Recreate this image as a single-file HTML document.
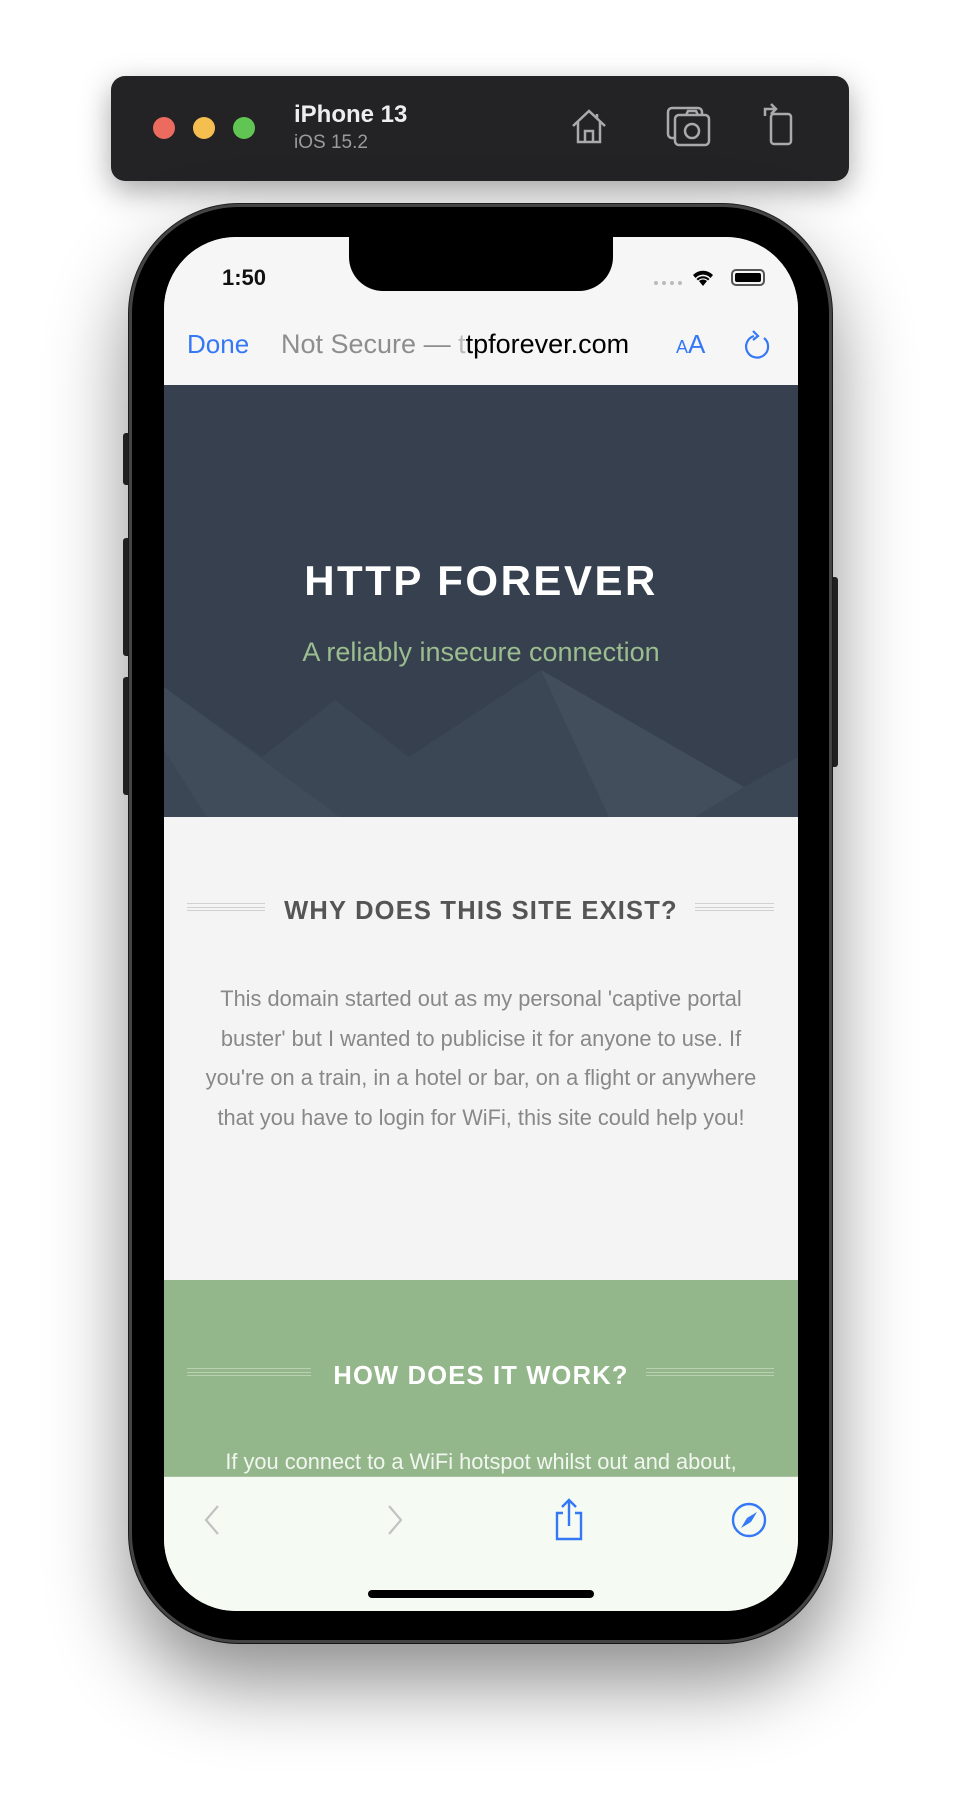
<!DOCTYPE html>
<html><head><meta charset="utf-8"><style>
*{margin:0;padding:0;box-sizing:border-box}
body{width:960px;height:1794px;background:#fff;position:relative;overflow:hidden;font-family:"Liberation Sans",sans-serif}
.abs{position:absolute}
.tb{left:111px;top:76px;width:738px;height:105px;background:#232325;border-radius:14px;box-shadow:0 10px 30px rgba(0,0,0,.35)}
.dot{width:22px;height:22px;border-radius:50%;top:41px}
.phone{left:129px;top:204px;width:703px;height:1439px;border-radius:110px;background:#000;border:3px solid #444;box-shadow:0 40px 80px rgba(0,0,0,.45),0 0 0 1px #222}
.screen{left:164px;top:237px;width:634px;height:1374px;border-radius:72px;overflow:hidden;background:#f4f4f4}
.btn{background:#2a2a2a;width:8px;border-radius:3px}
.hd{font-weight:bold;text-align:center;letter-spacing:1.5px}
.line{height:8px;border-top:1px solid;border-bottom:1px solid}
.line:before{content:"";display:block;height:3px;border-bottom:1px solid;border-color:inherit}
p.t{text-align:center;font-size:21.8px;line-height:39.5px}
</style></head><body>
<div class="abs tb">
 <div class="abs dot" style="left:42px;background:#ed6a5e"></div>
 <div class="abs dot" style="left:82px;background:#f5bf4f"></div>
 <div class="abs dot" style="left:122px;background:#61c554"></div>
 <div class="abs" style="left:183px;top:25px;color:#eee;font-weight:bold;font-size:24px">iPhone 13</div>
 <div class="abs" style="left:183px;top:56px;color:#9a9a9a;font-size:19px">iOS 15.2</div>
 <svg class="abs" style="left:458px;top:30px" width="40" height="40" viewBox="0 0 40 40" fill="none" stroke="#aaa" stroke-width="2.5"><path d="M4 20 L20 5 L36 20 M9 16 V36 H31 V16 M16 36 V25 H24 V36" /><path d="M28 8 V13" /></svg>
 <svg class="abs" style="left:555px;top:30px" width="46" height="42" viewBox="0 0 46 42" fill="none" stroke="#aaa" stroke-width="2.5"><rect x="2" y="2" width="34" height="30" rx="4"/><rect x="9" y="9" width="34" height="30" rx="4" fill="#232325"/><circle cx="26" cy="25" r="7"/><path d="M20 9 L22 5 H30 L32 9"/></svg>
 <svg class="abs" style="left:650px;top:24px" width="34" height="48" viewBox="0 0 34 48" fill="none" stroke="#aaa" stroke-width="2.5"><rect x="10" y="14" width="20" height="30" rx="3"/><path d="M4 16 V9 H14 M10 4 L15 9 L10 14"/></svg>
</div>
<div class="abs btn" style="left:123px;top:433px;height:52px"></div>
<div class="abs btn" style="left:123px;top:538px;height:118px"></div>
<div class="abs btn" style="left:123px;top:677px;height:118px"></div>
<div class="abs btn" style="left:830px;top:577px;height:190px"></div>
<div class="abs phone"></div>
<div class="abs screen">
 <div class="abs" style="left:0;top:0;width:634px;height:148px;background:#f6f6f6"></div>
 <div class="abs" style="left:185px;top:0;width:264px;height:54px;background:#000;border-radius:0 0 34px 34px"></div>
 <div class="abs" style="left:58px;top:28px;font-size:22px;font-weight:bold;color:#111">1:50</div>
 <div class="abs" style="left:490px;top:44px;width:28px;height:5px;border-top:4px dotted #bbb"></div>
 <svg class="abs" style="left:526px;top:30px" width="26" height="20" viewBox="0 0 26 20"><path d="M13 19 L9 14 A6 6 0 0 1 17 14 Z M3 8 A14 14 0 0 1 23 8 L20.5 11 A10 10 0 0 0 5.5 11 Z M6.5 12 A9 9 0 0 1 19.5 12 L18 13.5 A7 7 0 0 0 8 13.5Z" fill="#000"/></svg>
 <div class="abs" style="left:567px;top:32px;width:34px;height:17px;border:2px solid #555;border-radius:5px;padding:2px"><div style="background:#000;height:100%;border-radius:2px"></div></div>
 <div class="abs" style="left:23px;top:92px;font-size:26px;color:#3478f6">Done</div>
 <div class="abs" style="left:117px;top:92px;font-size:27px;letter-spacing:0px;color:#8e8e8e;white-space:nowrap">Not Secure — <span style="color:#bbb">t</span><span style="color:#000">tpforever.com</span></div>
 <div class="abs" style="left:512px;top:92px;font-size:26px;color:#3478f6"><span style="font-size:18px">A</span>A</div>
 <svg class="abs" style="left:580px;top:92px" width="28" height="32" viewBox="0 0 28 32" fill="none" stroke="#3478f6" stroke-width="2.2"><path d="M10 7 A11 11 0 1 0 20 9"/><path d="M9 2 L14 7 L9 11"/></svg>
 <div class="abs" style="left:0;top:148px;width:634px;height:432px;background:#36404e;overflow:hidden">
  <svg class="abs" style="left:0;top:0" width="634" height="432" viewBox="164 385 634 432">
   <polygon points="164,687 262,757 335,700 409,757 541,670 744,787 798,757 798,817 164,817" fill="#3c4755"/>
   <polygon points="164,687 340,817 207,817 164,750" fill="#414c5a"/>
   <polygon points="541,670 744,787 695,817 609,817" fill="#424e5b"/>
  </svg>
  <div class="abs hd" style="left:0;width:634px;top:172px;color:#fff;font-size:42px;letter-spacing:2.5px">HTTP FOREVER</div>
  <div class="abs" style="left:0;width:634px;top:252px;text-align:center;color:#9bbd8f;font-size:27px">A reliably insecure connection</div>
 </div>
 <div class="abs" style="left:0;top:580px;width:634px;height:463px;background:#f4f4f4">
  <div class="abs line" style="left:23px;top:86px;width:78px;border-color:#d0d0d0"></div>
  <div class="abs line" style="left:531px;top:86px;width:79px;border-color:#d0d0d0"></div>
  <div class="abs hd" style="left:0;width:634px;top:80px;color:#555;font-size:25.5px;letter-spacing:1.2px">WHY DOES THIS SITE EXIST?</div>
  <p class="abs t" style="left:0;width:634px;top:162px;color:#888">This domain started out as my personal 'captive portal<br>buster' but I wanted to publicise it for anyone to use. If<br>you're on a train, in a hotel or bar, on a flight or anywhere<br>that you have to login for WiFi, this site could help you!</p>
 </div>
 <div class="abs" style="left:0;top:1043px;width:634px;height:197px;background:#93b68a;overflow:hidden">
  <div class="abs line" style="left:23px;top:88px;width:124px;border-color:#b9d0b2"></div>
  <div class="abs line" style="left:482px;top:88px;width:128px;border-color:#b9d0b2"></div>
  <div class="abs hd" style="left:0;width:634px;top:82px;color:#fff;font-size:25.5px;letter-spacing:1.2px">HOW DOES IT WORK?</div>
  <p class="abs t" style="left:0;width:634px;top:162px;color:#f2f6f0">If you connect to a WiFi hotspot whilst out and about,</p>
 </div>
 <div class="abs" style="left:0;top:1239px;width:634px;height:135px;background:#f5fbf2;border-top:1px solid #a9c1a0"></div>
 <svg class="abs" style="left:36px;top:1266px" width="24" height="34" viewBox="0 0 24 34" fill="none" stroke="#c2c2c2" stroke-width="2.2"><path d="M18 3 L6 17 L18 31"/></svg>
 <svg class="abs" style="left:219px;top:1266px" width="24" height="34" viewBox="0 0 24 34" fill="none" stroke="#c2c2c2" stroke-width="2.2"><path d="M6 3 L18 17 L6 31"/></svg>
 <svg class="abs" style="left:387px;top:1260px" width="36" height="46" viewBox="0 0 36 46" fill="none" stroke="#3478f6" stroke-width="2.4"><path d="M12 16 H6 V42 H30 V16 H24 M18 3 V29 M11 10 L18 3 L25 10"/></svg>
 <svg class="abs" style="left:566px;top:1264px" width="38" height="38" viewBox="0 0 38 38"><circle cx="19" cy="19" r="16" fill="none" stroke="#3478f6" stroke-width="2.4"/><path d="M27 11 L21 21 L17 17 Z" fill="#3478f6"/><path d="M11 27 L17 17 L21 21 Z" fill="#3478f6"/></svg>
 <div class="abs" style="left:204px;top:1353px;width:226px;height:8px;background:#000;border-radius:4px"></div>
</div>
</body></html>
